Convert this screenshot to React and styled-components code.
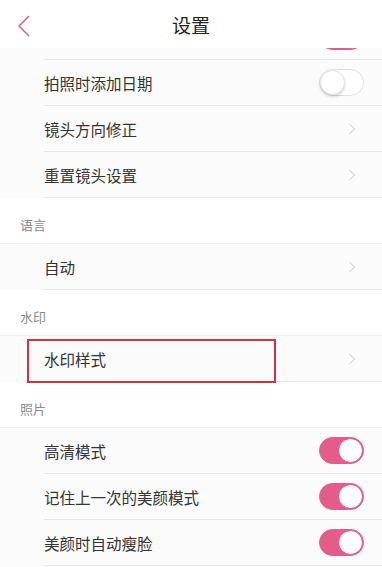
import React from 'react'
import styled, { createGlobalStyle } from 'styled-components'

const GlobalStyle = createGlobalStyle`
    html, body {
        margin: 0;
        padding: 0;
        background: #ffffff;
    }
    body {
        font-family: "Noto Sans CJK SC", "Noto Sans", sans-serif;
        -webkit-font-smoothing: antialiased;
    }
`

const Screen = styled.div`
    width: 382px;
    height: 567px;
    display: flex;
    flex-flow: column nowrap;
    overflow: hidden;
    background: #ffffff;
`

const Header = styled.header`
    height: 48px;
    flex: none;
    display: flex;
    align-items: center;
    justify-content: center;
    position: relative;
    background: #ffffff;
    z-index: 1;
`

const BackButton = styled.button`
    position: absolute;
    left: 12px;
    top: 12px;
    width: 24px;
    height: 28px;
    padding: 0;
    border: 0;
    background: none;
    display: flex;
    align-items: center;
    justify-content: center;
`

const Title = styled.h1`
    margin: 0;
    font-size: 19px;
    font-weight: 400;
    color: #222222;
`

const Scroll = styled.div`
    flex: 1;
    overflow: hidden;
`

const Content = styled.div`
    margin-top: ${props => props.offset}px;
`

const SectionTitle = styled.div`
    height: 45px;
    box-sizing: border-box;
    padding: 8px 0 0 20px;
    display: flex;
    align-items: center;
    font-size: 13px;
    color: #8a8a8a;
    background: #ffffff;
`

const Group = styled.div`
    background: #fbfbfb;
    border-top: ${props => props.flush ? 'none' : '1px solid #efefef'};
`

const Row = styled.div`
    height: 46px;
    box-sizing: border-box;
    margin-left: 44px;
    padding-right: 18px;
    border-bottom: 1px solid #e6e6e6;
    display: flex;
    align-items: center;
    justify-content: space-between;
    position: relative;
`

const Label = styled.span`
    font-size: 15.5px;
    color: #333333;
`

const Highlight = styled.div`
    position: absolute;
    left: -17px;
    top: 3px;
    width: 249px;
    height: 44px;
    box-sizing: border-box;
    border: 2px solid #cf3340;
    pointer-events: none;
`

const Track = styled.div`
    width: 45px;
    height: 27px;
    box-sizing: border-box;
    border-radius: 14px;
    position: relative;
    background: ${props => props.on ? '#e45c8a' : '#ffffff'};
    border: 1px solid ${props => props.on ? '#e45c8a' : '#dedede'};
`

const Knob = styled.div`
    position: absolute;
    top: 0;
    ${props => props.on ? 'right: 0;' : 'left: 0;'}
    width: 25px;
    height: 25px;
    border-radius: 50%;
    background: #ffffff;
    box-sizing: border-box;
    border: 1px solid ${props => props.on ? '#d9557f' : '#e2e2e2'};
    box-shadow: ${props => props.on ? 'none' : '0 2px 3px rgba(0, 0, 0, .15)'};
`

const Toggle = ({ on }) => (
    <Track on={on}>
        <Knob on={on} />
    </Track>
)

const Chevron = () => (
    <svg width="8" height="12" viewBox="0 0 8 12" style={{ marginRight: 8 }}>
        <path d="M1.5 1 L6.5 6 L1.5 11" fill="none" stroke="#c4c4c4" strokeWidth="1" />
    </svg>
)

const Item = ({ label, toggle, on, boxed }) => (
    <Row>
        {boxed && <Highlight />}
        <Label>{label}</Label>
        {toggle ? <Toggle on={on} /> : <Chevron />}
    </Row>
)

export default function App() {
    return (
        <Screen>
            <GlobalStyle />
            <Header>
                <BackButton aria-label="back">
                    <svg width="14" height="24" viewBox="0 0 14 24">
                        <path d="M12 2 L2 12 L12 22" fill="none" stroke="#d2598a" strokeWidth="1.4" />
                    </svg>
                </BackButton>
                <Title>设置</Title>
            </Header>
            <Scroll>
                <Content offset={-34}>
                    <Group flush>
                        <Item label="" toggle on />
                        <Item label="拍照时添加日期" toggle />
                        <Item label="镜头方向修正" />
                        <Item label="重置镜头设置" />
                    </Group>
                    <SectionTitle>语言</SectionTitle>
                    <Group>
                        <Item label="自动" />
                    </Group>
                    <SectionTitle>水印</SectionTitle>
                    <Group>
                        <Item label="水印样式" boxed />
                    </Group>
                    <SectionTitle>照片</SectionTitle>
                    <Group>
                        <Item label="高清模式" toggle on />
                        <Item label="记住上一次的美颜模式" toggle on />
                        <Item label="美颜时自动瘦脸" toggle on />
                    </Group>
                </Content>
            </Scroll>
        </Screen>
    )
}
